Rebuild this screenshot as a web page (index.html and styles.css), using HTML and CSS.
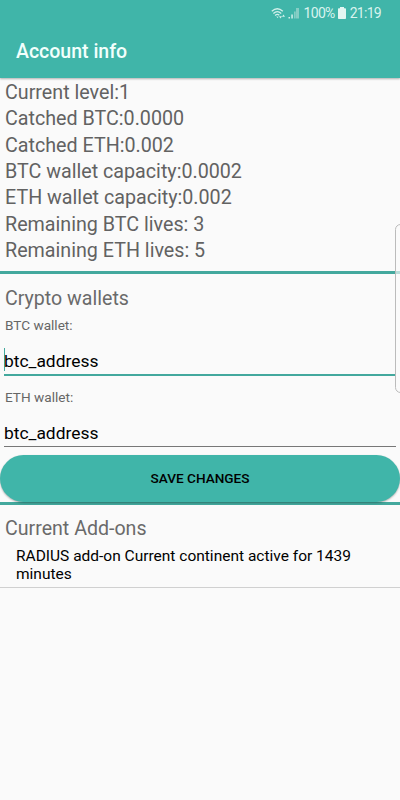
FILE: index.html
```html
<!DOCTYPE html>
<html lang="en">
<head>
    <meta charset="UTF-8">
    <meta name="viewport" content="width=device-width, initial-scale=1.0">
    <title>Account info</title>
    <link rel="stylesheet" href="styles.css">
</head>
<body>

<header class="app-header">
    <div class="status-bar">
        <svg class="wifi-icon" width="15" height="13" viewBox="0 0 15 13" fill="none" stroke="#d4f0eb" stroke-width="1.3">
            <path d="M0.8 4.2Q6.3 -0.8 11.8 4.2"/>
            <path d="M2.4 6.4Q6.3 2.9 10.2 6.4"/>
            <path d="M4.1 8.4Q6.3 6.5 8.3 8.2"/>
            <path d="M5.2 9.5L6.6 11L7.6 9.8Z" fill="#d4f0eb" stroke="none"/>
            <path d="M8 9.3H11L9.5 11.5ZM11 9.8H14L12.5 7.6Z" fill="#d4f0eb" stroke="none"/>
        </svg>
        <svg class="signal-icon" width="12" height="12" viewBox="0 0 12 12">
            <path d="M0.5 10H2V11.5H0.5ZM3.3 7.5H4.8V11.5H3.3Z" fill="#d4f0eb"/>
            <path d="M6 4.5H7.7V11.5H6ZM8 1H11V11.5H8Z" fill="#86cec5"/>
        </svg>
        <span class="percent">100%</span>
        <svg class="battery-icon" width="8" height="12" viewBox="0 0 8 12">
            <path d="M2 0H6V1.3H7.2Q8 1.3 8 2V11.3Q8 12 7.2 12H0.8Q0 12 0 11.3V2Q0 1.3 0.8 1.3H2Z" fill="#e2f6f2"/>
        </svg>
        <span class="clock">21:19</span>
    </div>
    <h1>Account info</h1>
</header>

<main>
    <section class="stats">
        <p>Current level:1</p>
        <p>Catched BTC:0.0000</p>
        <p>Catched ETH:0.002</p>
        <p>BTC wallet capacity:0.0002</p>
        <p>ETH wallet capacity:0.002</p>
        <p>Remaining BTC lives: 3</p>
        <p>Remaining ETH lives: 5</p>
    </section>

    <section class="wallets">
        <h2>Crypto wallets</h2>
        <div class="label">BTC wallet:</div>
        <div class="field focused">btc_address</div>
        <div class="label">ETH wallet:</div>
        <div class="field">btc_address</div>
        <button class="save-button">SAVE CHANGES</button>
    </section>

    <section class="addons">
        <h2>Current Add-ons</h2>
        <div class="addon">RADIUS add-on Current continent active for 1439 minutes</div>
    </section>
</main>

<div class="edge-handle"></div>

</body>
</html>
```
FILE: styles.css
```css
* {
    box-sizing: border-box;
}

body {
    margin: 0;
    height: 800px;
    overflow: hidden;
    position: relative;
    font-family: Roboto, sans-serif;
    background-color: #fafafa;
    color: #000;
}

h1, h2, p {
    margin: 0;
}

.app-header {
    height: 78px;
    background-color: #40b5a9;
    box-shadow: 0 1px 2px rgba(0, 0, 0, 0.3);
}

.status-bar {
    height: 26px;
    padding-right: 19px;
    display: flex;
    align-items: center;
    justify-content: flex-end;
    font-size: 14px;
    letter-spacing: -0.7px;
    color: #d9f3ee;
}

.signal-icon {
    margin-left: 2px;
}

.percent {
    margin-left: 4px;
}

.battery-icon {
    margin: 0 4px 0 3px;
}

h1 {
    padding: 1px 0 0 16px;
    line-height: 50px;
    font-size: 19.5px;
    font-weight: 500;
    color: #f2fffc;
}

.stats {
    height: 196px;
    padding: 2px 5px 0;
    border-bottom: 3px solid #43a89d;
}

.stats p {
    font-size: 19.7px;
    line-height: 26.35px;
    color: #626262;
}

.wallets {
    height: 231px;
    padding-top: 12px;
    border-bottom: 3px solid #43a89d;
}

h2 {
    height: 25px;
    padding-left: 5px;
    font-size: 19.6px;
    font-weight: 400;
    line-height: 26px;
    color: #6a6a6a;
}

.label {
    height: 28px;
    padding-left: 5px;
    font-size: 13.6px;
    line-height: 28px;
    color: #666;
}

.field {
    height: 44px;
    margin: 0 4px;
    padding-top: 8px;
    font-size: 17.4px;
    line-height: 29px;
    background: linear-gradient(#777, #777) 0 35px / 100% 1px no-repeat;
}

/* cursor and accent underline */
.focused {
    background:
        linear-gradient(#43a89d, #43a89d) 0 9px / 1px 23px no-repeat,
        linear-gradient(#43a89d, #43a89d) 0 35px / 100% 2px no-repeat;
}

.save-button {
    display: block;
    width: 100%;
    height: 47px;
    padding: 0 0 2px;
    border: none;
    border-radius: 24px;
    background-color: #40b5a9;
    box-shadow: 0 1px 2px rgba(0, 0, 0, 0.3);
    font-family: inherit;
    font-size: 13.6px;
    font-weight: 500;
    color: #000;
}

.addons {
    padding-top: 11px;
}

.addon {
    height: 47px;
    padding: 6px 16px 0;
    border-bottom: 1px solid #d0d0d0;
    font-size: 15.5px;
    line-height: 18px;
}

.edge-handle {
    position: absolute;
    top: 224px;
    right: -6px;
    width: 11px;
    height: 169px;
    border: 1px solid #bbb;
    border-radius: 6px;
    background-color: rgba(250, 250, 250, 0.65);
}
```
